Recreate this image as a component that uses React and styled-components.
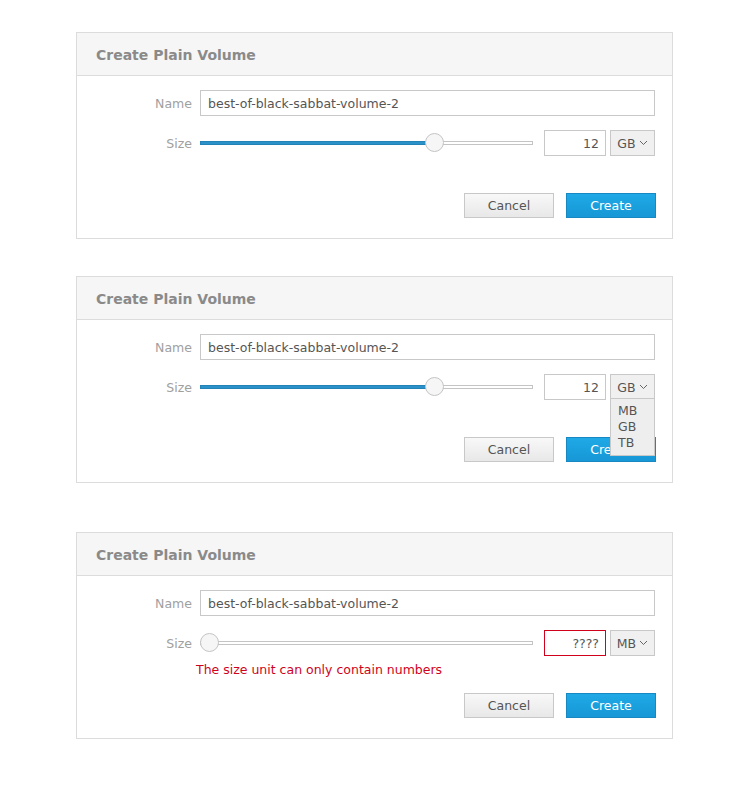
import React from 'react'
import styled, { createGlobalStyle } from 'styled-components'

const GlobalStyle = createGlobalStyle`
    body{
        margin: 0;
        background: #fff;
        font-family: "DejaVu Sans", "Liberation Sans", sans-serif;
    }
`

function Chevron() {
    return (
        <svg width="9" height="6" viewBox="0 0 9 6">
            <path d="M1 1 L4.5 4.5 L8 1" fill="none" stroke="#666" strokeWidth="1" />
        </svg>
    )
}

function Slider({ value }) {
    return (
        <Track>
            <Rail />
            {value > 0 && <Fill style={{ width: `calc(${value} * (100% - 19px) + 9px)` }} />}
            <Thumb style={{ left: `calc(${value} * (100% - 19px))` }} />
        </Track>
    )
}

function VolumeDialog({ top, size, unit, value, error, open }) {
    return (
        <Panel $top={top}>
            <Header>Create Plain Volume</Header>
            <Body>
                <Row>
                    <Label>Name</Label>
                    <TextInput defaultValue='best-of-black-sabbat-volume-2' />
                </Row>
                <Row>
                    <Label>Size</Label>
                    <Slider value={value} />
                    <SizeInput $error={!!error} defaultValue={size} />
                    <UnitWrap>
                        <Unit>{unit} <Chevron /></Unit>
                        {open && (
                            <Menu>
                                <li>MB</li>
                                <li>GB</li>
                                <li>TB</li>
                            </Menu>
                        )}
                    </UnitWrap>
                </Row>
                <Message>{error}</Message>
                <Actions>
                    <Button>Cancel</Button>
                    <Button $primary>Create</Button>
                </Actions>
            </Body>
        </Panel>
    )
}

function App() {
    return (
        <Page>
            <GlobalStyle />
            <VolumeDialog top={32} size='12' unit='GB' value={0.715} />
            <VolumeDialog top={37} size='12' unit='GB' value={0.715} open />
            <VolumeDialog top={49} size='????' unit='MB' value={0} error='The size unit can only contain numbers' />
        </Page>
    )
}

export default App

const Page = styled.div`
    padding-left: 76px;
    padding-bottom: 40px;
`

const Panel = styled.div`
    width: 595px;
    margin-top: ${(p) => p.$top}px;
    border: 1px solid #dcdcdc;
    background: #fff;
`

const Header = styled.div`
    height: 42px;
    line-height: 44px;
    padding-left: 19px;
    background: #f6f6f6;
    border-bottom: 1px solid #dcdcdc;
    color: #8a8a8a;
    font-size: 14px;
    font-weight: bold;
`

const Body = styled.div`
    padding: 14px 17px 20px 0;
    display: flex;
    flex-direction: column;
`

const Row = styled.div`
    display: flex;
    align-items: center;
    height: 26px;
    & + &{
        margin-top: 14px;
    }
`

const Label = styled.span`
    width: 115px;
    margin-right: 8px;
    text-align: right;
    color: #a0a0a0;
    font-size: 12.5px;
`

const TextInput = styled.input`
    flex: 1;
    height: 26px;
    box-sizing: border-box;
    border: 1px solid #c8c8c8;
    padding: 0 7px;
    font-family: inherit;
    font-size: 12.5px;
    color: #555;
    outline: none;
`

const Track = styled.div`
    position: relative;
    width: 333px;
    height: 26px;
    margin-right: 11px;
`

const Rail = styled.div`
    position: absolute;
    left: 0;
    right: 0;
    top: 11px;
    height: 4px;
    box-sizing: border-box;
    border: 1px solid #c4c4c4;
    background: #fff;
`

const Fill = styled.div`
    position: absolute;
    left: 0;
    top: 11px;
    height: 4px;
    box-sizing: border-box;
    background: #2a92c9;
    border: 1px solid #2382b6;
`

const Thumb = styled.div`
    position: absolute;
    top: 3px;
    width: 19px;
    height: 19px;
    box-sizing: border-box;
    border-radius: 50%;
    background: #f6f6f6;
    border: 1px solid #c4c4c4;
`

const SizeInput = styled.input`
    width: 62px;
    height: 26px;
    box-sizing: border-box;
    border: 1px solid ${(p) => (p.$error ? '#d0021b' : '#c8c8c8')};
    padding: 0 6px;
    text-align: right;
    font-family: inherit;
    font-size: 12.5px;
    color: #555;
    outline: none;
    margin-right: 4px;
`

const UnitWrap = styled.div`
    position: relative;
`

const Unit = styled.div`
    width: 45px;
    height: 26px;
    box-sizing: border-box;
    border: 1px solid #c8c8c8;
    background: #f0f0f0;
    display: flex;
    align-items: center;
    justify-content: center;
    gap: 3px;
    font-size: 12.5px;
    color: #555;
`

const Menu = styled.ul`
    position: absolute;
    top: 24px;
    left: 0;
    width: 45px;
    box-sizing: border-box;
    margin: 0;
    padding: 4px 0 4px 7px;
    list-style: none;
    background: #eeeeee;
    border: 1px solid #c8c8c8;
    font-size: 12.5px;
    line-height: 16px;
    color: #555;
    z-index: 2;
`

const Message = styled.div`
    height: 37px;
    box-sizing: border-box;
    padding: 6px 0 0 119px;
    line-height: 16px;
    font-size: 12.5px;
    color: #d0021b;
`

const Actions = styled.div`
    display: flex;
    justify-content: flex-end;
    gap: 12px;
    margin-right: -1px;
`

const Button = styled.button`
    width: 90px;
    height: 25px;
    box-sizing: border-box;
    font-family: inherit;
    font-size: 12.5px;
    padding: 0;
    border: 1px solid ${(p) => (p.$primary ? '#1888c2' : '#c8c8c8')};
    color: ${(p) => (p.$primary ? '#fff' : '#555')};
    background: ${(p) => (p.$primary ? 'linear-gradient(#1fa9e6, #1797d6)' : 'linear-gradient(#f8f8f8, #e8e8e8)')};
`
